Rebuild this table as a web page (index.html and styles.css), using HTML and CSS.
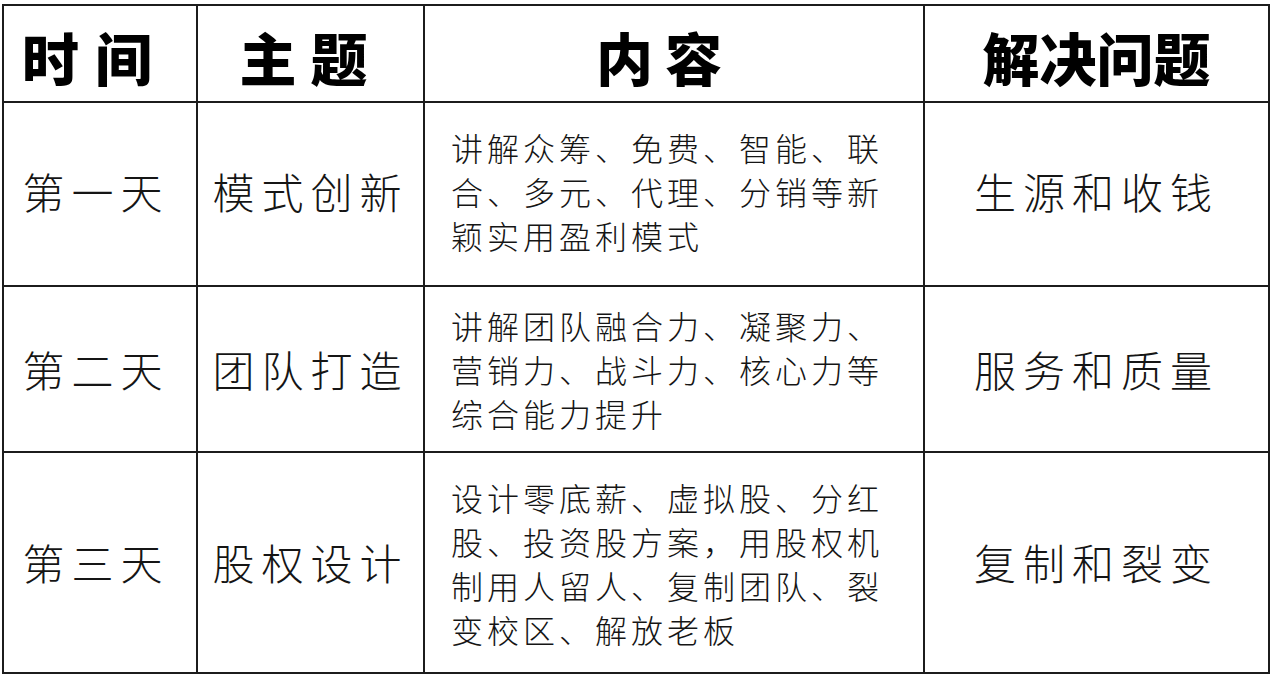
FILE: index.html
```html
<!DOCTYPE html>
<html lang="zh-CN">
<head>
<meta charset="utf-8">
<title>课程安排</title>
<link rel="stylesheet" href="styles.css">
</head>
<body>
<table class="plan">
  <colgroup>
    <col class="c-time">
    <col class="c-topic">
    <col class="c-content">
    <col class="c-solve">
  </colgroup>
  <thead>
    <tr class="row-head">
      <th class="h-time">时间</th>
      <th class="h-topic">主题</th>
      <th class="h-content">内容</th>
      <th class="h-solve">解决问题</th>
    </tr>
  </thead>
  <tbody>
    <tr class="row-1">
      <td class="big day">第一天</td>
      <td class="big">模式创新</td>
      <td class="desc"><div class="desc-box">讲解众筹、免费、智能、联合、多元、代理、分销等新颖实用盈利模式</div></td>
      <td class="big">生源和收钱</td>
    </tr>
    <tr class="row-2">
      <td class="big day">第二天</td>
      <td class="big">团队打造</td>
      <td class="desc"><div class="desc-box">讲解团队融合力、凝聚力、营销力、战斗力、核心力等综合能力提升</div></td>
      <td class="big">服务和质量</td>
    </tr>
    <tr class="row-3">
      <td class="big day">第三天</td>
      <td class="big">股权设计</td>
      <td class="desc"><div class="desc-box">设计零底薪、虚拟股、分红股、投资股方案，用股权机制用人留人、复制团队、裂变校区、解放老板</div></td>
      <td class="big">复制和裂变</td>
    </tr>
  </tbody>
</table>
</body>
</html>
```

FILE: styles.css
```css
html, body {
  margin: 0;
  padding: 0;
  background: #ffffff;
}

body {
  font-family: "Noto Sans CJK SC", "Noto Sans", sans-serif;
  color: #151515;
}

.plan {
  margin: 4px 0 0 2px;
  width: 1266px;
  table-layout: fixed;
  border-collapse: collapse;
}

.c-time { width: 194px; }
.c-topic { width: 227px; }
.c-content { width: 500px; }
.c-solve { width: 345px; }

.plan th,
.plan td {
  border: 2px solid #1c1c1c;
  padding: 0;
  text-align: center;
  vertical-align: middle;
}

.plan th {
  font-size: 57px;
  font-weight: 900;
  color: #000;
  line-height: 1;
  padding-top: 6px;
}

.plan th.h-time {
  letter-spacing: 16px;
  padding-right: 10px;
}

.plan th.h-topic {
  letter-spacing: 14px;
}

.plan th.h-content {
  letter-spacing: 12px;
  padding-right: 18px;
}

.row-head { height: 97px; }
.row-1 { height: 184px; }
.row-2 { height: 166px; }
.row-3 { height: 221px; }

.plan .row-1 td {
  padding-bottom: 6px;
}

.big {
  font-size: 42px;
  font-weight: 300;
  letter-spacing: 7px;
  line-height: 1.2;
}

.plan td.day {
  padding-right: 8px;
}

.plan td.desc {
  text-align: left;
  padding-left: 26px;
}

.desc-box {
  width: 440px;
  font-size: 32px;
  font-weight: 300;
  letter-spacing: 4px;
  line-height: 44px;
}
```
